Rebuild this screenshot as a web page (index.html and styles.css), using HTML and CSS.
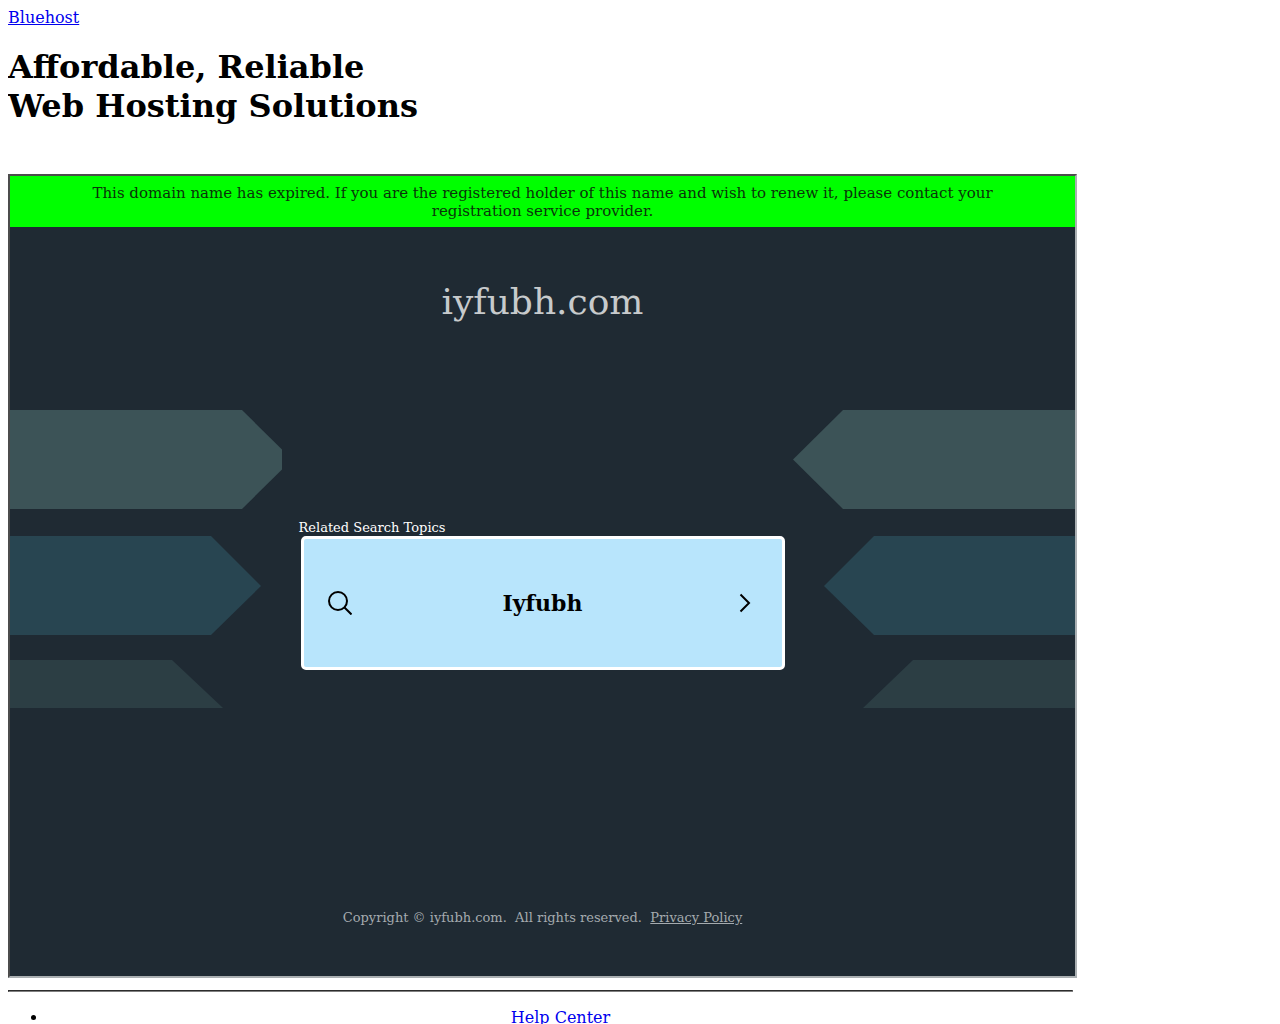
FILE: index.html
```
<!DOCTYPE html>
<html lang="en">
<head>
    <meta charset="UTF-8">
    <meta name="viewport" content="width=device-width, initial-scale=1.0">
    <title>Bluehost</title>
    <link rel="stylesheet" href="styles.css">
</head>
<body>
    <div class="container">
        <a href="#">Bluehost</a>
        <h1>Affordable, Reliable<br>Web Hosting Solutions</h1>

        <div class="frame">
            <div class="notice">This domain name has expired. If you are the registered holder of this name and wish to renew it, please contact your registration service provider.</div>
            <div class="domain">iyfubh.com</div>

            <div class="main">
                <svg class="arrows" width="272" height="298" viewBox="0 0 272 298" aria-hidden="true">
                    <path fill="#3c5357" d="M0 0H232L282 49.5L232 99H0Z"/>
                    <path fill="#284551" d="M0 126H201L251 176L201 225H0Z"/>
                    <path fill="#2c3e44" d="M0 250H162L213 298H0Z"/>
                </svg>

                <div class="topics">
                    <div class="label">Related Search Topics</div>
                    <a class="topic" href="#">
                        <svg width="24" height="24" viewBox="0 0 24 24" fill="none" stroke="#000" stroke-width="2" aria-hidden="true">
                            <circle cx="10" cy="10" r="9"/>
                            <path d="M16.5 16.5L23.5 23.5"/>
                        </svg>
                        <span>Iyfubh</span>
                        <svg width="24" height="24" viewBox="0 0 24 24" fill="none" stroke="#000" stroke-width="2" aria-hidden="true">
                            <path d="M7.5 3.5L16 12L7.5 20.5"/>
                        </svg>
                    </a>
                </div>

                <svg class="arrows right" width="282" height="298" viewBox="0 0 282 298" aria-hidden="true">
                    <path fill="#3c5357" d="M282 0H50L0 49.5L50 99H282Z"/>
                    <path fill="#284551" d="M282 126H81L31 176L81 225H282Z"/>
                    <path fill="#2c3e44" d="M282 250H120L70 298H282Z"/>
                </svg>
            </div>

            <div class="copyright">Copyright © iyfubh.com.&nbsp; All rights reserved.&nbsp; <a href="#">Privacy Policy</a></div>
        </div>

        <hr>
        <ul class="links">
            <li><a href="#">Help Center</a></li>
        </ul>
    </div>
</body>
</html>
```

FILE: styles.css
```
body {
    font-family: "DejaVu Serif", serif;
    font-size: 16px;
    line-height: 19px;
    margin: 8px;
    background: #fff;
}
a {
    color: #0000ee;
}
.container {
    max-width: 1065px;
}
h1 {
    font-size: 32px;
    line-height: 39px;
    margin: 21px 0 48px;
}
.frame {
    box-sizing: content-box;
    width: 100%;
    min-height: 800px;
    border: 2px solid;
    border-color: #4c4c4c #aaafb2 #aaafb2 #4c4c4c;
    background: #1f2a33;
}
.notice {
    background: #00ff00;
    color: #0a330a;
    font-size: 15px;
    line-height: 18px;
    padding: 8px 5% 7px;
    text-align: center;
}
.domain {
    color: #c7cacc;
    font-size: 36px;
    line-height: 42px;
    padding: 54px 0 87px;
    text-align: center;
}
.main {
    display: grid;
    grid-template-columns: 1fr minmax(0, 488px) 1fr;
}
.arrows {
    display: block;
}
.right {
    justify-self: end;
}
.topics {
    padding-top: 109px;
}
.label {
    color: #fff;
    font-size: 13px;
    line-height: 17px;
}
.topic {
    display: flex;
    align-items: center;
    justify-content: space-between;
    height: 128px;
    margin: 0 2px;
    padding: 0 24px;
    border: 3px solid #fff;
    border-radius: 5px;
    background: #b8e5fc;
    color: #000;
    font-size: 22px;
    font-weight: bold;
    line-height: 26px;
    text-decoration: none;
}
.copyright {
    color: #a5abaf;
    font-size: 13px;
    line-height: 16px;
    padding-top: 202px;
    text-align: center;
}
.copyright a {
    color: inherit;
}
hr {
    margin: 12px 0 16px;
    border: 1px inset #808080;
}
.links {
    margin: 0;
    padding-left: 40px;
    text-align: center;
}
```
